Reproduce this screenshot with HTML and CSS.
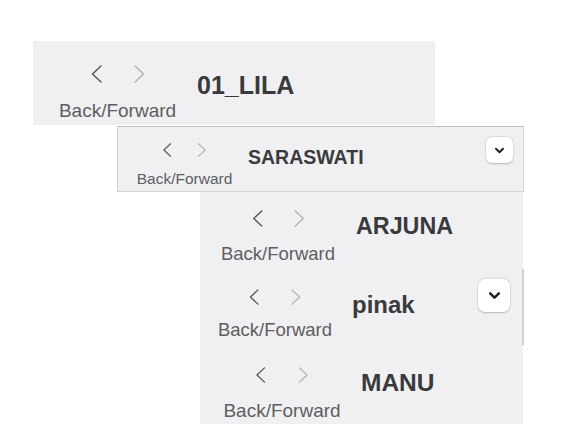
FILE: index.html
```html
<!DOCTYPE html>
<html>
<head>
<meta charset="utf-8">
<link rel="stylesheet" href="styles.css">
</head>
<body>
<div class="canvas">
  <div class="panel panel--lila">
    <div class="bar bar--lila">
      <div class="nav">
        <div class="arrows">
          <svg class="chev chev--back" viewBox="0 0 11 18"><polyline points="10,1 1.5,9 10,17"/></svg>
          <svg class="chev chev--fwd" viewBox="0 0 11 18"><polyline points="1,1 9.5,9 1,17"/></svg>
        </div>
        <div class="nav-label">Back/Forward</div>
      </div>
      <div class="title">01_LILA</div>
    </div>
  </div>

  <div class="panel panel--saraswati">
    <div class="bar bar--saraswati">
      <div class="nav">
        <div class="arrows">
          <svg class="chev chev--back" viewBox="0 0 11 18"><polyline points="10,1 1.5,9 10,17"/></svg>
          <svg class="chev chev--fwd" viewBox="0 0 11 18"><polyline points="1,1 9.5,9 1,17"/></svg>
        </div>
        <div class="nav-label">Back/Forward</div>
      </div>
      <div class="title">SARASWATI</div>
      <div class="dropdown dropdown--small">
        <svg viewBox="0 0 12 8"><polyline points="2,2 6,6 10,2"/></svg>
      </div>
    </div>
  </div>

  <div class="panel panel--stack">
    <div class="bar bar--arjuna">
      <div class="nav">
        <div class="arrows">
          <svg class="chev chev--back" viewBox="0 0 11 18"><polyline points="10,1 1.5,9 10,17"/></svg>
          <svg class="chev chev--fwd" viewBox="0 0 11 18"><polyline points="1,1 9.5,9 1,17"/></svg>
        </div>
        <div class="nav-label">Back/Forward</div>
      </div>
      <div class="title">ARJUNA</div>
    </div>
    <div class="bar bar--pinak">
      <div class="nav">
        <div class="arrows">
          <svg class="chev chev--back" viewBox="0 0 11 18"><polyline points="10,1 1.5,9 10,17"/></svg>
          <svg class="chev chev--fwd" viewBox="0 0 11 18"><polyline points="1,1 9.5,9 1,17"/></svg>
        </div>
        <div class="nav-label">Back/Forward</div>
      </div>
      <div class="title">pinak</div>
      <div class="dropdown dropdown--large">
        <svg viewBox="0 0 12 8"><polyline points="2,2 6,6 10,2"/></svg>
      </div>
    </div>
    <div class="bar bar--manu">
      <div class="nav">
        <div class="arrows">
          <svg class="chev chev--back" viewBox="0 0 11 18"><polyline points="10,1 1.5,9 10,17"/></svg>
          <svg class="chev chev--fwd" viewBox="0 0 11 18"><polyline points="1,1 9.5,9 1,17"/></svg>
        </div>
        <div class="nav-label">Back/Forward</div>
      </div>
      <div class="title">MANU</div>
    </div>
    <div class="scroll-line"></div>
  </div>
</div>
</body>
</html>
```

FILE: styles.css
```css
* { box-sizing: border-box; }

html, body {
  margin: 0;
  padding: 0;
  background: #ffffff;
}

body {
  font-family: "Liberation Sans", Arial, sans-serif;
  color: #3a3a3c;
}

.canvas {
  padding-top: 41px;
  display: flex;
  flex-direction: column;
  align-items: flex-start;
}

.panel {
  background: #f0f0f3;
}

.panel--lila {
  margin-left: 33px;
  width: 402px;
  height: 84px;
}

.panel--saraswati {
  margin-left: 117px;
  margin-top: 1px;
  width: 407px;
  height: 66px;
  border: 1px solid #d4d4d6;
  border-top-color: #bfbfc2;
}

.panel--stack {
  position: relative;
  margin-left: 200px;
  width: 323px;
  height: 232px;
  display: flex;
  flex-direction: column;
}

.bar {
  display: flex;
  align-items: flex-start;
  padding-left: var(--pl);
  height: var(--h);
}

.nav {
  width: var(--nw);
  margin-top: var(--pt);
  display: flex;
  flex-direction: column;
  align-items: center;
  flex: none;
}

.arrows {
  display: flex;
  gap: var(--cg);
}

.chev {
  width: var(--cw);
  height: var(--ch);
  display: block;
  fill: none;
  stroke-width: 1.5;
  stroke-linecap: round;
  stroke-linejoin: round;
}

.chev--back { stroke: #58585a; }
.chev--fwd { stroke: #b4b4b8; }

.nav-label {
  margin-top: var(--lm);
  font-size: var(--lf);
  line-height: var(--lf);
  color: #5e5e60;
  white-space: nowrap;
}

.title {
  margin-left: var(--tm);
  margin-top: calc(var(--pt) + var(--tt));
  font-size: var(--tf);
  line-height: var(--tf);
  font-weight: 700;
  color: #3a3a3c;
  white-space: nowrap;
}

.dropdown {
  margin-left: auto;
  background: #ffffff;
  border-radius: 6px;
  box-shadow: 0 0.5px 2px rgba(0, 0, 0, 0.22), 0 0 0 0.5px rgba(0, 0, 0, 0.06);
  display: flex;
  align-items: center;
  justify-content: center;
  flex: none;
}

.dropdown svg {
  fill: none;
  stroke: #1e1e20;
  stroke-width: 2.2;
  stroke-linecap: round;
  stroke-linejoin: round;
}

.dropdown--small {
  width: 27px;
  height: 26px;
  margin-top: 10px;
  margin-right: 10px;
}
.dropdown--small svg { width: 11px; height: 7px; }

.dropdown--large {
  width: 32px;
  height: 33px;
  margin-top: 7px;
  margin-right: 13px;
  border-radius: 7px;
}
.dropdown--large svg { width: 13px; height: 9px; }

.bar--lila {
  --pl: 25px; --h: 84px; --pt: 24px; --nw: 119px;
  --cw: 11px; --ch: 18px; --cg: 32px;
  --lm: 18px; --lf: 19px;
  --tm: 20px; --tt: 8px; --tf: 25px;
}

.bar--saraswati {
  --pl: 19px; --h: 64px; --pt: 16px; --nw: 95px;
  --cw: 10px; --ch: 14px; --cg: 25px;
  --lm: 14px; --lf: 15.5px;
  --tm: 16px; --tt: 5px; --tf: 19.5px;
}

.bar--arjuna {
  --pl: 21px; --h: 80px; --pt: 18px; --nw: 114px;
  --cw: 11px; --ch: 17px; --cg: 31px;
  --lm: 18px; --lf: 18.5px;
  --tm: 21px; --tt: 5px; --tf: 23.3px;
}

.bar--pinak {
  --pl: 18px; --h: 80px; --pt: 17px; --nw: 114px;
  --cw: 10px; --ch: 16px; --cg: 32px;
  --lm: 16px; --lf: 18.5px;
  --tm: 20px; --tt: 4px; --tf: 24px;
}

.bar--manu {
  --pl: 23px; --h: 72px; --pt: 15px; --nw: 118px;
  --cw: 11px; --ch: 16px; --cg: 32px;
  --lm: 18px; --lf: 19px;
  --tm: 20px; --tt: 4px; --tf: 24.5px;
}

.scroll-line {
  position: absolute;
  right: -1px;
  top: 77px;
  width: 2px;
  height: 76px;
  background: #cfcfd2;
}
```
